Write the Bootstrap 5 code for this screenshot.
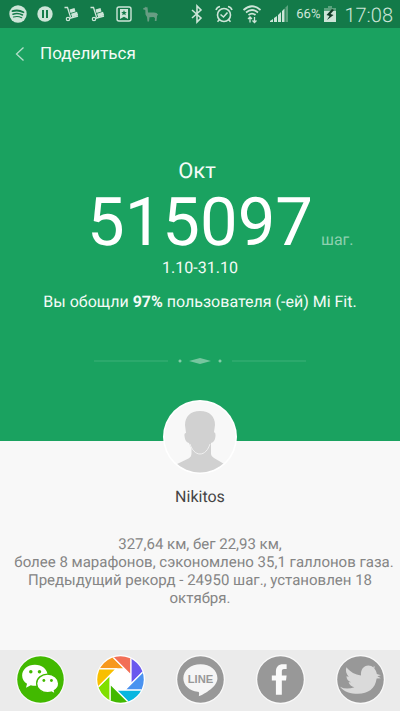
<!DOCTYPE html>
<html lang="ru">
<head>
<meta charset="utf-8">
<meta name="viewport" content="width=device-width, initial-scale=1">
<title>Поделиться</title>
<link rel="stylesheet" href="https://cdn.jsdelivr.net/npm/bootstrap@5.3.0/dist/css/bootstrap.min.css">
<style>
body{font-family:Roboto,"Noto Sans",sans-serif;background:#f8f8f8;color:#858585;min-height:100vh;text-rendering:geometricPrecision}
svg{display:block;flex:none}
.statusbar{background:#137a49;color:#cde5d8;height:28px;padding:0 7px 0 9px}
.sys-left{gap:9px}
.sys-right{gap:7px}
.pct{font-size:13px;line-height:28px;padding-top:2px}
.clock{font-size:20px;line-height:28px;font-weight:300;padding-top:2px}
.hero{background:#1aa260;color:#f4fbf7;padding-bottom:75px}
.topbar{height:52px;padding-left:14px;gap:14px}
.topbar h1{font-size:17px;line-height:24px;font-weight:400}
.back{color:#b4dfca}
.month{font-size:22px;line-height:28px;margin-top:78px;padding-right:6px}
.count{display:grid;grid-template-columns:1fr auto 1fr;align-items:baseline;color:#fff;margin-top:3px}
.total{grid-column:2;font-size:67px;line-height:68px}
.unit{font-size:16px;color:#8dd0af;padding-left:8px}
.range{font-size:16px;line-height:20px;margin-top:1px}
.beat{font-size:16px;line-height:20px;margin-top:14px}
.ornament{margin-top:44px}
.avatar{width:74px;height:74px;margin-top:-41px}
.person{font-size:16px;line-height:20px;color:#444;margin-top:13px}
.details{font-size:15px;line-height:18px;margin-top:28px}
.sharebar{background:#ebebeb;padding:5px 0 7px}
.share{width:49px;height:49px}
.line-word{font:700 11px "Liberation Sans",Arial,sans-serif}
</style>
<script src="https://cdn.jsdelivr.net/npm/bootstrap@5.3.0/dist/js/bootstrap.bundle.min.js"></script>
</head>
<body class="d-flex flex-column">
<div class="statusbar d-flex align-items-center justify-content-between">
  <div class="sys-left d-flex align-items-center">
    <svg width="18" height="18" viewBox="0 0 18 18"><circle cx="9" cy="9" r="8.7" fill="#cde5d8"/><g fill="none" stroke="#137a49" stroke-linecap="round"><path d="M3.5 6.2Q9 4.400 14.500 7.200" stroke-width="1.800"/><path d="M4 9.200Q9 7.600 13.500 10" stroke-width="1.500"/><path d="M4.500 12Q9 10.700 12.700 12.700" stroke-width="1.200"/></g></svg>
    <svg width="18" height="18" viewBox="0 0 18 18"><circle cx="9" cy="9" r="7.700" fill="#cde5d8"/><path d="M7 5v8M11 5v8" stroke="#137a49" stroke-width="2"/></svg>
    <svg width="17" height="18" viewBox="0 0 17 18"><g id="trolley"><path d="M1.500 2.500h3l3 9.500M6 13.500l9-2.500" fill="none" stroke="#cde5d8" stroke-width="1.300"/><circle cx="5" cy="14" r="1.700" fill="none" stroke="#cde5d8" stroke-width="1.200"/><path d="M6.500 4.500l5-1.500 1 3.500-5 1.500zM8 8.700l6-2 1.200 3.500-6 2z" fill="#cde5d8"/></g></svg>
    <svg width="17" height="18" viewBox="0 0 17 18"><use href="#trolley"/></svg>
    <svg width="18" height="18" viewBox="0 0 18 18"><rect x="2" y="2" width="14" height="14" rx="2" fill="none" stroke="#cde5d8" stroke-width="1.400"/><path d="M5 4h8v10l-4-2.200L5 14z" fill="#cde5d8"/><path d="M9 5l.8 1.900 2 .1-1.500 1.300.5 2L9 9.200l-1.800 1.100.5-2L6.200 7l2-.1z" fill="#137a49"/></svg>
    <svg width="18" height="18" viewBox="0 0 18 18"><path d="M3.500 1.500l.7 1 1-.7.5 2L6 7.500h6q3 0 4 2l-1 1.500-.5 5h-1.700l.2-3-1.500-1-4 .2L7 16.500H5.500L5 12 3.500 9.500 3.300 5 1 4.300 1.500 3l1.700-.5z" fill="#679d83"/></svg>
  </div>
  <div class="sys-right d-flex align-items-center">
    <svg width="18" height="20" viewBox="0 0 18 20"><path d="M4 6l9 8-4 4V2l4 4-9 8" fill="none" stroke="#cde5d8" stroke-width="1.600"/></svg>
    <svg width="22" height="20" viewBox="0 0 22 20"><g fill="none" stroke="#cde5d8" stroke-width="1.600"><circle cx="11" cy="11" r="6.500"/><path d="M7.500 10.500l3 2.500 4-4.500M3 6q1-3 4-3.500M19 6q-1-3-4-3.500M6.500 15.500l-2 2.200M15.500 15.500l2 2.200"/></g></svg>
    <svg width="20" height="20" viewBox="0 0 20 20"><g fill="none" stroke="#cde5d8" stroke-width="1.700"><path d="M1.500 6Q10-1.500 18.500 6M4 8.500q6-5 12 0M6.500 11q3.500-2.800 7 0"/><path d="M8 18.500V13M6 15l2-2 2 2M12.500 13v5.500M10.500 16.500l2 2 2-2" stroke-width="1.300"/></g></svg>
    <svg width="20" height="20" viewBox="0 0 20 20"><path d="M1 18v-1l3-2v3zM5 18v-4l3-2v6zM9 18v-7l3-3v10zM13 18V7l2.500-2.500V18z" fill="#cde5d8"/><path d="M16.500 18V3.500L19 1v17z" fill="#5ba37e"/></svg>
    <div class="d-flex align-items-center gap-1">
    <span class="pct">66%</span>
    <svg width="12" height="18" viewBox="0 0 12 18"><path d="M0 3h4V1h4v2h4v4H0z" fill="#5ba37e"/><path d="M0 6h12v11H0z" fill="#cde5d8"/><path d="M8 4L2.500 10l3 1L3 15l6.500-5-3-1L10 5z" fill="#123b27"/></svg>
    <span class="clock ps-1">17:08</span>
    </div>
  </div>
</div>

<header class="hero">
  <div class="topbar d-flex align-items-center">
    <button type="button" class="back btn p-0 border-0" aria-label="Назад"><svg width="12" height="16" viewBox="0 0 12 16"><path d="M9.500 1.500L2.500 8l7 6.500" fill="none" stroke="currentColor" stroke-width="1.300"/></svg></button>
    <h1 class="m-0">Поделиться</h1>
  </div>
  <div class="text-center">
    <div class="month">Окт</div>
    <div class="count"><span class="total">515097</span><span class="unit text-start">шаг.</span></div>
    <div class="range">1.10-31.10</div>
    <p class="beat mb-0">Вы обощли <b>97%</b> пользователя (-ей) Mi Fit.</p>
  </div>
  <svg class="ornament mx-auto" width="214" height="10" viewBox="0 0 214 10"><path d="M1 5h74M139 5h74" stroke="#3cb078"/><path d="M96 5l11-3 11 3-11 3z" fill="#76c69f"/><path d="M87 3.500L88.500 5 87 6.500 85.500 5zM127 3.500L128.500 5 127 6.500 125.500 5z" fill="#8dd0af" stroke="#8dd0af" stroke-width=".5"/></svg>
</header>

<main class="flex-grow-1 text-center">
  <svg class="avatar mx-auto position-relative" viewBox="0 0 74 74" role="img" aria-label="Nikitos"><defs><clipPath id="face"><circle cx="37" cy="37" r="35.500"/></clipPath></defs><circle cx="37" cy="37" r="37" fill="#fff"/><circle cx="37" cy="37" r="35.500" fill="#f8f8f8"/><g clip-path="url(#face)" fill="#d1d1d1"><path d="M28.500 42v11q0 4-3 5.500L12 65l2 9h46l2-9.500L51 58q-3-1.500-3-4V42z"/><path d="M37 11C27 11 22 17 22 25l1 8q-2 0-1.500 3 .500 6 4.500 7c2 6 6 11 11 11s9-5 11-11q4-1 4.500-7 .500-3-1.500-4l1-7C52 17 47 11 37 11z"/><path d="M27 44c2 6 5.500 10 10 10s8-4 10-10" fill="none" stroke="#f8f8f8" stroke-width=".8"/></g></svg>
  <h2 class="person mb-0 fw-normal">Nikitos</h2>
  <p class="details mb-0">327,64 км, бег 22,93 км,<br><span class="text-nowrap ps-2">более 8 марафонов, сэкономлено 35,1 галлонов газа.</span><br>Предыдущий рекорд - 24950 шаг., установлен 18<br>октября.</p>
</main>

<footer class="sharebar">
  <div class="row row-cols-5 g-0">
    <div class="col d-flex justify-content-center"><button type="button" class="share btn p-0 border-0" aria-label="WeChat"><svg viewBox="0 0 48 48"><circle cx="24" cy="24" r="24" fill="#fafafa"/><circle cx="24" cy="24" r="22.800" fill="#42b900"/><path d="M18.500 9.500C11.500 9.500 6 14 6 20c0 3.500 1.800 6.300 4.800 8.200L9.800 32l4.700-2.300q2 .500 4 .500C25.500 30.200 31 26 31 20S25.500 9.500 18.500 9.500z" fill="#fff"/><path d="M31 18.800c-6 0-10.800 4-10.800 9s4.800 9 10.800 9q2 0 3.600-.5l3.900 2-.9-3.400c2.600-1.600 4.200-4.200 4.200-7.100 0-5-4.800-9-10.800-9z" fill="#fff" stroke="#42b900" stroke-width="1.300"/><g fill="#42b900"><circle cx="14.500" cy="16.500" r="1.700"/><circle cx="23" cy="16.500" r="1.700"/><circle cx="27.300" cy="25" r="1.400"/><circle cx="34.700" cy="25" r="1.400"/></g></svg></button></div>
    <div class="col d-flex justify-content-center"><button type="button" class="share btn p-0 border-0" aria-label="Моменты"><svg viewBox="-24 -24 48 48"><defs><clipPath id="lens"><circle r="22.800"/></clipPath><path id="blade" d="M4.270-10.300H-30V-44.570z"/></defs><circle r="24" fill="#fff"/><g clip-path="url(#lens)" stroke="#fff" stroke-width="1.200"><use href="#blade" fill="#f7981d"/><use href="#blade" fill="#f26f56" transform="rotate(45)"/><use href="#blade" fill="#6a58ee" transform="rotate(90)"/><use href="#blade" fill="#4a92f0" transform="rotate(135)"/><use href="#blade" fill="#08b6e0" transform="rotate(180)"/><use href="#blade" fill="#42b900" transform="rotate(225)"/><use href="#blade" fill="#80df00" transform="rotate(270)"/><use href="#blade" fill="#f8bf00" transform="rotate(315)"/></g></svg></button></div>
    <div class="col d-flex justify-content-center"><button type="button" class="share btn p-0 border-0" aria-label="LINE"><svg viewBox="0 0 48 48"><circle cx="24" cy="24" r="24" fill="#fafafa"/><circle cx="24" cy="24" r="22.800" fill="#989898"/><path d="M24 9C14.500 9 7.200 15 7.200 22.700c0 7 6 12.300 14 13.300 1.800.3 1.600 1 1.200 4.500 6-2.800 18.200-9.500 18.200-17.800C40.600 15 33.500 9 24 9z" fill="#f5f5f5"/><text class="line-word" x="24" y="27" text-anchor="middle" fill="#989898">LINE</text></svg></button></div>
    <div class="col d-flex justify-content-center"><button type="button" class="share btn p-0 border-0" aria-label="Facebook"><svg viewBox="0 0 48 48"><circle cx="24" cy="24" r="24" fill="#fafafa"/><circle cx="24" cy="24" r="22.800" fill="#989898"/><path d="M19.500 39V25h-4v-5h4v-3.500c0-5 2.500-7.500 7-7.500H30v4.800h-2.500c-1.800 0-2.200.8-2.200 2.500V20H30l-.6 5h-4.100v14z" fill="#fafafa"/></svg></button></div>
    <div class="col d-flex justify-content-center"><button type="button" class="share btn p-0 border-0" aria-label="Twitter"><svg viewBox="0 0 48 48"><circle cx="24" cy="24" r="24" fill="#fafafa"/><circle cx="24" cy="24" r="22.800" fill="#989898"/><path d="M10.200 12c4 5 8.500 7.200 14.300 8-.5-5.500 2.500-9.700 7.200-9.700 2 0 3.800.8 5 2 .5-1 .4-1.500.3-2 1 1 1 2 .5 3 1.500 1.500 2 3 2.500 5.200l4 1.300-3.500 1 3.500 2-4.200.3C38.500 33 31.500 38 21.500 38 14.500 38 7.500 36 4 31q6 3.500 14 .5c-3-.5-4.700-2-5.700-4.700h2.500c-3-1.300-4.300-3-4.600-6l2.300.6C10 18.500 9 15.500 10.200 12z" fill="#dadada"/></svg></button></div>
  </div>
</footer>
</body>
</html>
